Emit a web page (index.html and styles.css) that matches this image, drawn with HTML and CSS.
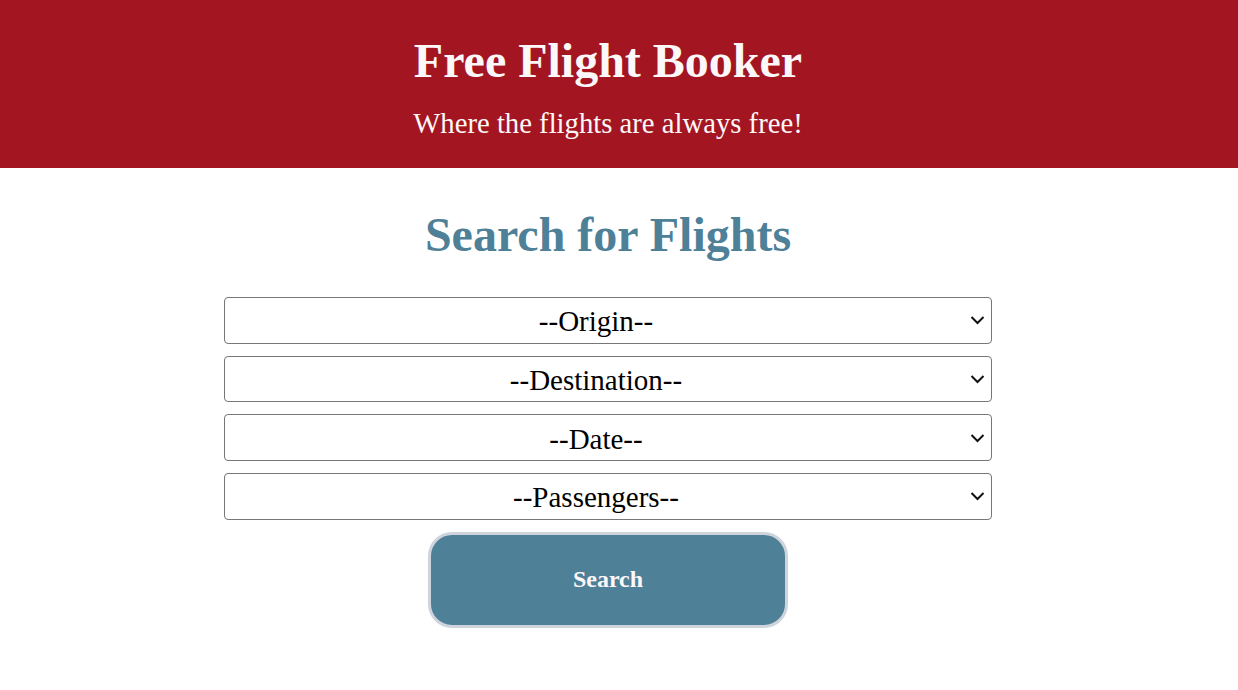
FILE: index.html
```html
<!DOCTYPE html>
<html lang="en">
<head>
<meta charset="utf-8">
<title>Free Flight Booker</title>
<link rel="stylesheet" href="styles.css">
</head>
<body>
<header class="banner">
  <h1 class="banner-title">Free Flight Booker</h1>
  <p class="banner-sub">Where the flights are always free!</p>
</header>
<main class="content">
  <h2 class="search-title">Search for Flights</h2>
  <form class="search-form">
    <select class="field"><option>--Origin--</option></select>
    <select class="field"><option>--Destination--</option></select>
    <select class="field"><option>--Date--</option></select>
    <select class="field"><option>--Passengers--</option></select>
    <button type="button" class="search-btn">Search</button>
  </form>
</main>
</body>
</html>
```

FILE: styles.css
```css
* { box-sizing: border-box; }
body {
  margin: 0;
  font-family: "Liberation Serif", "Times New Roman", serif;
  background: #ffffff;
}
.banner {
  background: #a31621;
  color: #fcf7f8;
  height: 168px;
  display: flex;
  flex-direction: column;
  align-items: center;
  padding-top: 33px;
  padding-right: 22px;
}
.banner-title {
  margin: 0;
  font-size: 48px;
  font-weight: bold;
  line-height: 56px;
}
.banner-sub {
  margin: 16px 0 0;
  font-size: 28.7px;
  line-height: 36px;
}
.content {
  display: flex;
  flex-direction: column;
  align-items: center;
  padding-right: 22px;
  padding-top: 40px;
}
.search-title {
  margin: 0;
  color: #4e8098;
  font-size: 48px;
  line-height: 54px;
  font-weight: bold;
}
.search-form {
  margin-top: 35px;
  display: flex;
  flex-direction: column;
  align-items: center;
  gap: 12px;
}
.field {
  -webkit-appearance: none;
  appearance: none;
  width: 768px;
  height: 46.7px;
  padding: 2px 36px 0 12px;
  font-family: "Liberation Serif", "Times New Roman", serif;
  font-size: 29px;
  text-align: center;
  text-align-last: center;
  color: #000;
  background-color: #fff;
  background-image: url("data:image/svg+xml;utf8,<svg xmlns='http://www.w3.org/2000/svg' width='15' height='10' viewBox='0 0 15 10'><path d='M1.5 2 L7.5 8 L13.5 2' fill='none' stroke='%23111' stroke-width='2'/></svg>");
  background-repeat: no-repeat;
  background-position: right 6px center;
  border: 1px solid #767676;
  border-radius: 4px;
}
.search-btn {
  width: 360px;
  height: 96px;
  background: #4e8098;
  color: #fcf7f8;
  border: 3px solid #ced3dc;
  border-radius: 24px;
  font-family: "Liberation Serif", "Times New Roman", serif;
  font-size: 24px;
  font-weight: bold;
}
```
